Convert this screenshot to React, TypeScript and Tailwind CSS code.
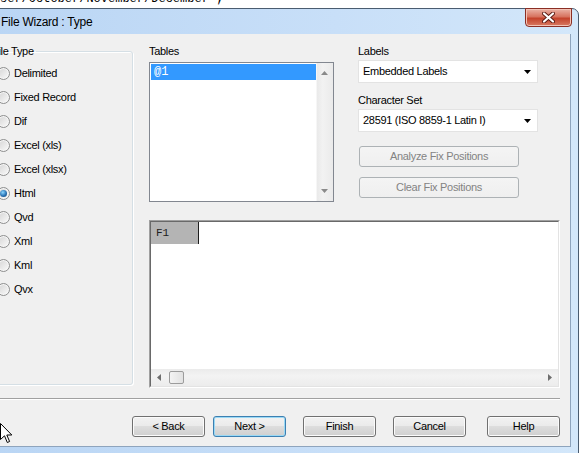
import React from "react";

const ui = "font-['Liberation_Sans',Arial,sans-serif] text-[11px] tracking-[-0.3px] text-black";

const fileTypes = ["Delimited", "Fixed Record", "Dif", "Excel (xls)", "Excel (xlsx)", "Html", "Qvd", "Xml", "Kml", "Qvx"];

function Radio({ label, checked }: { label: string; checked?: boolean }) {
  return (
    <div className="flex h-[24px] items-center gap-[4px]">
      <span className="flex h-[13px] w-[13px] items-center justify-center rounded-full border border-[#8e8f8f] bg-gradient-to-br from-[#d4d4d4] to-[#fbfbfb] shadow-[inset_0_0_0_1px_#f6f6f6]">
        {checked && (
          <span className="h-[7px] w-[7px] rounded-full bg-[radial-gradient(circle_at_40%_35%,#8ad6ff,#2a73b5_55%,#0f3d6b)]" />
        )}
      </span>
      <span>{label}</span>
    </div>
  );
}

function Arrow({ dir, color = "#8a8a8a" }: { dir: "up" | "down" | "left" | "right"; color?: string }) {
  const pts = {
    up: "0,4 3.5,0 7,4",
    down: "0,0 7,0 3.5,4",
    left: "4,0 4,7 0,3.5",
    right: "0,0 0,7 4,3.5",
  }[dir];
  const horiz = dir === "left" || dir === "right";
  return (
    <svg width={horiz ? 4 : 7} height={horiz ? 7 : 4} viewBox={horiz ? "0 0 4 7" : "0 0 7 4"}>
      <polygon points={pts} fill={color} />
    </svg>
  );
}

function Combo({ value }: { value: string }) {
  return (
    <div className="flex h-[23px] w-[180px] items-center justify-between border border-[#e3e3e3] bg-white pl-[4px] pr-[6px]">
      <span>{value}</span>
      <Arrow dir="down" color="#000" />
    </div>
  );
}

function DisabledButton({ label, className = "" }: { label: string; className?: string }) {
  return (
    <div
      className={`flex h-[21px] w-[160px] items-center justify-center rounded-[3px] border border-[#adb2b5] bg-gradient-to-b from-[#f4f4f4] to-[#efefef] text-[#838383] ${className}`}
    >
      {label}
    </div>
  );
}

function Button({ label, focused, className = "" }: { label: string; focused?: boolean; className?: string }) {
  return (
    <div
      className={`flex h-[21px] w-[73px] items-center justify-center rounded-[3px] border bg-[linear-gradient(#f2f2f2,#ebebeb_45%,#dddddd_50%,#cfcfcf)] ${
        focused
          ? "border-[#3c7fb1] shadow-[inset_0_0_0_1px_#9ad9f5] bg-[linear-gradient(#f0f8fd,#e3f2fb_45%,#d2ebf9_50%,#c3e3f6)]"
          : "border-[#707070] shadow-[inset_0_0_0_1px_#fbfbfb]"
      } ${className}`}
    >
      {label}
    </div>
  );
}

export default function App() {
  return (
    <div className={`relative h-[453px] w-[580px] overflow-hidden bg-white ${ui}`}>
      {/* editor text behind the dialog */}
      <div className="h-[8px] overflow-hidden">
        <div className="-mt-[9px] whitespace-nowrap font-['Liberation_Mono',monospace] text-[12px] leading-[16px] tracking-normal">
          ser/October/November/December';
        </div>
      </div>

      {/* dialog window */}
      <div className="-ml-[27px] flex w-[606px] flex-col rounded-tr-[7px] border border-[#4a5c70] bg-[linear-gradient(to_right,#b9d5f4,#c8dff8_60%,#d3e7fa)]">
        {/* title bar */}
        <div className="flex h-[25px] items-start justify-between">
          <div className="mt-[5px] pl-[27px] text-[12px] leading-[16px] tracking-[-0.25px]">File Wizard : Type</div>
          <div className="-mt-[1px] mr-[6px] flex h-[19px] w-[47px] items-center justify-center rounded-b-[4px] border border-[#8b2f25] bg-[linear-gradient(#eab3a6,#d7735f_45%,#c4432c_55%,#d87a62)] shadow-[inset_0_0_0_1px_#f3c3b6]">
            <svg width="13" height="11" viewBox="0 0 13 11">
              <path d="M2 1.5 L11 9.5 M11 1.5 L2 9.5" stroke="#5a1a12" strokeWidth="4" strokeLinecap="round" />
              <path d="M2 1.5 L11 9.5 M11 1.5 L2 9.5" stroke="#ffffff" strokeWidth="2.2" strokeLinecap="round" />
            </svg>
          </div>
        </div>

        {/* frame around client */}
        <div className="pb-[6px] pl-[6px] pr-[7px]">
          <div className="flex h-[413px] w-[591px] flex-col border-b border-r border-[#8ea4bd] bg-[#f0f0f0] pt-[10px]">
            <div className="flex h-[344px] items-start">
              {/* File Type group */}
              <fieldset className="ml-[3px] h-[341px] w-[150px] min-w-0 rounded-[3px] border border-[#d5dfe5] pb-0 pl-[13px] pr-0 pt-[3px] shadow-[inset_1px_1px_0_#ffffff,1px_1px_0_#ffffff]">
                <legend className="-ml-[7px] px-[2px] leading-[14px]">File Type</legend>
                {fileTypes.map((t) => (
                  <Radio key={t} label={t} checked={t === "Html"} />
                ))}
              </fieldset>

              {/* right side */}
              <div className="ml-[16px] flex w-[411px] flex-col">
                <div className="flex h-[158px] items-start">
                  <div className="flex flex-col">
                    <div className="leading-[14px]">Tables</div>
                    <div className="mt-[4px] flex h-[140px] w-[185px] border border-[#828790] bg-white">
                      <div className="flex-1 pl-[1px] pt-[1px]">
                        <div className="flex h-[16px] items-center bg-[#3399ff] pl-[3px] font-['Liberation_Mono',monospace] text-[12px] tracking-normal text-white">
                          @1
                        </div>
                      </div>
                      <div className="flex w-[17px] flex-col items-center justify-between bg-[linear-gradient(to_right,#e8e8e8,#f2f2f2_40%,#eaeaea)] py-[8px] shadow-[inset_1px_0_0_#f6f6f6]">
                        <Arrow dir="up" />
                        <Arrow dir="down" />
                      </div>
                    </div>
                  </div>

                  <div className="ml-[24px] flex flex-col">
                    <div className="leading-[14px]">Labels</div>
                    <div className="mt-[2px]">
                      <Combo value="Embedded Labels" />
                    </div>
                    <div className="mt-[10px] leading-[14px]">Character Set</div>
                    <div className="mt-[2px]">
                      <Combo value="28591 (ISO 8859-1 Latin I)" />
                    </div>
                    <DisabledButton label="Analyze Fix Positions" className="ml-[1px] mt-[14px]" />
                    <DisabledButton label="Clear Fix Positions" className="ml-[1px] mt-[10px]" />
                  </div>
                </div>

                {/* data grid */}
                <div className="mt-[18px] h-[168px] w-[411px] border border-b-white border-l-[#a0a0a0] border-r-white border-t-[#a0a0a0]">
                  <div className="flex h-full flex-col border border-b-[#e3e3e3] border-l-[#696969] border-r-[#e3e3e3] border-t-[#696969] bg-white">
                    <div className="flex h-[22px] w-[48px] items-center border-r border-r-[#1e1e1e] bg-[#b4b4b4] pl-[5px] font-['Liberation_Mono',monospace] text-[11px] tracking-normal text-[#202020]">
                      F1
                    </div>
                    <div className="flex-1" />
                    <div className="flex h-[17px] items-center bg-[linear-gradient(#ebebeb,#f3f3f3_40%,#ececec)] pl-[6px] pr-[6px]">
                      <Arrow dir="left" color="#6e6e6e" />
                      <div className="ml-[8px] h-[13px] w-[15px] rounded-[2px] border border-[#9c9c9c] bg-[linear-gradient(to_right,#f4f4f4,#e2e2e2)]" />
                      <div className="flex-1" />
                      <Arrow dir="right" color="#6e6e6e" />
                    </div>
                  </div>
                </div>
              </div>
            </div>

            {/* separator */}
            <div className="mt-[10px] h-[2px] w-[580px] border-b border-t border-b-white border-t-[#a0a0a0]" />

            {/* buttons */}
            <div className="mt-[16px] flex pl-[152px]">
              <Button label="< Back" />
              <Button label="Next >" focused className="ml-[8px]" />
              <Button label="Finish" className="ml-[17px]" />
              <Button label="Cancel" className="ml-[17px]" />
              <Button label="Help" className="ml-[21px]" />
            </div>
          </div>
        </div>
      </div>

      {/* mouse pointer */}
      <svg className="absolute left-0 top-[423px]" width="13" height="21" viewBox="0 0 13 21">
        <polygon points="0.5,0.5 0.5,16.5 4.5,12.8 7.3,19.5 9.6,18.5 6.8,12 11.8,12" fill="#ffffff" stroke="#000000" strokeWidth="1" />
      </svg>
    </div>
  );
}
